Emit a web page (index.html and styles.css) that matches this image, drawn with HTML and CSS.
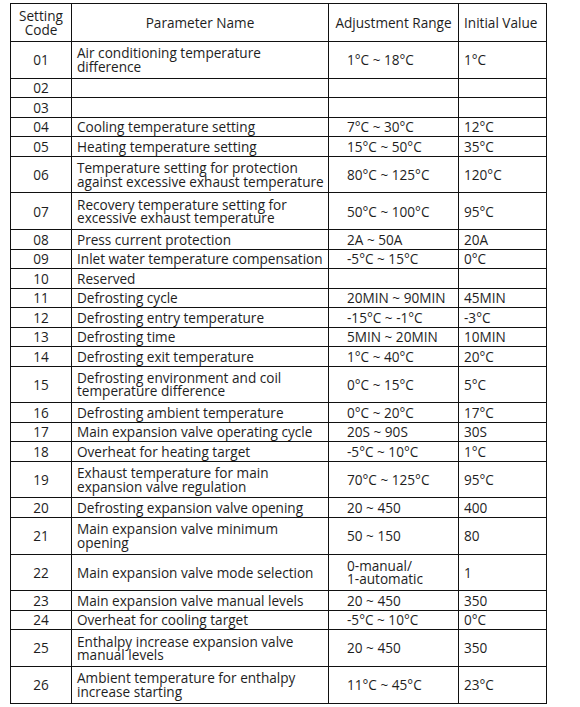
FILE: index.html
```html
<!DOCTYPE html>
<html>
<head>
<meta charset="utf-8">
<link rel="stylesheet" href="styles.css">
</head>
<body>
<table class="params">
  <colgroup>
    <col class="c-code"><col class="c-name"><col class="c-range"><col class="c-init">
  </colgroup>
  <thead>
    <tr class="head">
      <th>Setting<br>Code</th>
      <th>Parameter Name</th>
      <th>Adjustment Range</th>
      <th class="init">Initial Value</th>
    </tr>
  </thead>
  <tbody>
    <tr class="r2"><td>01</td><td>Air conditioning temperature<br>difference</td><td class="rng">1°C ~ 18°C</td><td>1°C</td></tr>
    <tr class="r1"><td>02</td><td></td><td class="rng"></td><td></td></tr>
    <tr class="r1"><td>03</td><td></td><td class="rng"></td><td></td></tr>
    <tr class="r1"><td>04</td><td>Cooling temperature setting</td><td class="rng">7°C ~ 30°C</td><td>12°C</td></tr>
    <tr class="r1"><td>05</td><td>Heating temperature setting</td><td class="rng">15°C ~ 50°C</td><td>35°C</td></tr>
    <tr class="r2"><td>06</td><td>Temperature setting for protection<br>against excessive exhaust temperature</td><td class="rng">80°C ~ 125°C</td><td>120°C</td></tr>
    <tr class="r2"><td>07</td><td>Recovery temperature setting for<br>excessive exhaust temperature</td><td class="rng">50°C ~ 100°C</td><td>95°C</td></tr>
    <tr class="r1"><td>08</td><td>Press current protection</td><td class="rng">2A ~ 50A</td><td>20A</td></tr>
    <tr class="r1"><td>09</td><td>Inlet water temperature compensation</td><td class="rng">-5°C ~ 15°C</td><td>0°C</td></tr>
    <tr class="r1"><td>10</td><td>Reserved</td><td class="rng"></td><td></td></tr>
    <tr class="r1"><td>11</td><td>Defrosting cycle</td><td class="rng">20MIN ~ 90MIN</td><td>45MIN</td></tr>
    <tr class="r1"><td>12</td><td>Defrosting entry temperature</td><td class="rng">-15°C ~ -1°C</td><td>-3°C</td></tr>
    <tr class="r1"><td>13</td><td>Defrosting time</td><td class="rng">5MIN ~ 20MIN</td><td>10MIN</td></tr>
    <tr class="r1"><td>14</td><td>Defrosting exit temperature</td><td class="rng">1°C ~ 40°C</td><td>20°C</td></tr>
    <tr class="r2"><td>15</td><td>Defrosting environment and coil<br>temperature difference</td><td class="rng">0°C ~ 15°C</td><td>5°C</td></tr>
    <tr class="r1"><td>16</td><td>Defrosting ambient temperature</td><td class="rng">0°C ~ 20°C</td><td>17°C</td></tr>
    <tr class="r1"><td>17</td><td>Main expansion valve operating cycle</td><td class="rng">20S ~ 90S</td><td>30S</td></tr>
    <tr class="r1"><td>18</td><td>Overheat for heating target</td><td class="rng">-5°C ~ 10°C</td><td>1°C</td></tr>
    <tr class="r2"><td>19</td><td>Exhaust temperature for main<br>expansion valve regulation</td><td class="rng">70°C ~ 125°C</td><td>95°C</td></tr>
    <tr class="r1"><td>20</td><td>Defrosting expansion valve opening</td><td class="rng">20 ~ 450</td><td>400</td></tr>
    <tr class="r2"><td>21</td><td>Main expansion valve minimum<br>opening</td><td class="rng">50 ~ 150</td><td>80</td></tr>
    <tr class="r2"><td>22</td><td>Main expansion valve mode selection</td><td class="rng">0-manual/<br>1-automatic</td><td>1</td></tr>
    <tr class="r1"><td>23</td><td>Main expansion valve manual levels</td><td class="rng">20 ~ 450</td><td>350</td></tr>
    <tr class="r1"><td>24</td><td>Overheat for cooling target</td><td class="rng">-5°C ~ 10°C</td><td>0°C</td></tr>
    <tr class="r2"><td>25</td><td>Enthalpy increase expansion valve<br>manual levels</td><td class="rng">20 ~ 450</td><td>350</td></tr>
    <tr class="r2"><td>26</td><td>Ambient temperature for enthalpy<br>increase starting</td><td class="rng">11°C ~ 45°C</td><td>23°C</td></tr>
  </tbody>
</table>
</body>
</html>
```

FILE: styles.css
```css
html, body {
  margin: 0;
  background: #ffffff;
}
body {
  padding: 3px 0 0 10px;
  font-family: "Open Sans", "Liberation Sans", sans-serif;
  font-size: 13.6px;
  color: #1e1e1e;
}
.params {
  border-collapse: collapse;
  table-layout: fixed;
  width: 536px;
}
.c-code { width: 61px; }
.c-name { width: 257px; }
.c-range { width: 130px; }
.c-init { width: 88px; }
.params th,
.params td {
  border: 1px solid #111111;
  padding: 0 2px 0 5px;
  line-height: 13.4px;
  vertical-align: middle;
  text-align: left;
  font-weight: normal;
  white-space: nowrap;
}
.params th {
  text-align: center;
  padding: 0 2px;
}
.params th.init {
  text-align: left;
  padding-left: 5px;
}
.params td:first-child {
  text-align: center;
  padding: 0 2px;
}
.params td.rng {
  padding-left: 18px;
}
.head { height: 38px; }
.r1 { height: 19.5px; }
.r2 { height: 36.7px; }
```
